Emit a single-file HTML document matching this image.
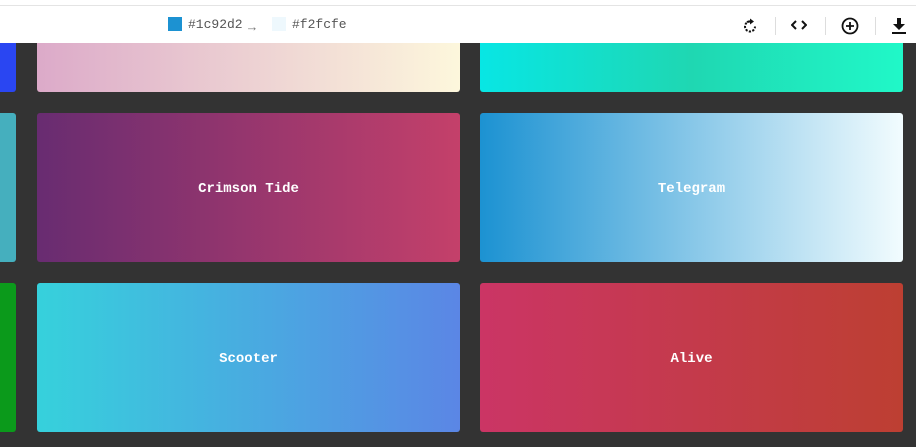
<!DOCTYPE html>
<html><head><style>
body{margin:0;width:916px;height:447px;background:#333;position:relative;overflow:hidden;font-family:"Liberation Mono",monospace}
.c{position:absolute;border-radius:3px;color:#fff;font-weight:bold;font-size:14px;display:flex;align-items:center;justify-content:center;padding-top:2px;box-sizing:border-box}
.bar{position:absolute;left:0;width:916px;background:#fff;border-top:1px solid #e4e4e4;box-sizing:border-box;top:5px;height:38px}
.top{position:absolute;left:0;top:0;width:916px;height:5px;background:#fff}
.t{position:absolute;top:11px;font-size:13px;color:#555}
.sep{position:absolute;top:11px;width:1px;height:18px;background:#ddd}
</style></head><body>
<div class="c" style="left:0;top:40px;width:16px;height:52px;background:#2a46f2;border-radius:0 3px 3px 0"></div>
<div class="c" style="left:37px;top:40px;width:423px;height:52px;background:linear-gradient(90deg,#dcaac9,#fdf7dc)"></div>
<div class="c" style="left:480px;top:40px;width:423px;height:52px;background:linear-gradient(90deg,#08e6e4,#1fd7b2 50%,#20f8c8)"></div>
<div class="c" style="left:0;top:113px;width:16px;height:149px;background:#45afbe;border-radius:0 3px 3px 0"></div>
<div class="c" style="left:37px;top:113px;width:423px;height:149px;background:linear-gradient(90deg,#682c71,#c4406a)">Crimson Tide</div>
<div class="c" style="left:480px;top:113px;width:423px;height:149px;background:linear-gradient(90deg,#1c92d2,#f2fcfe)">Telegram</div>
<div class="c" style="left:0;top:283px;width:16px;height:149px;background:#0b9a1b;border-radius:0 3px 3px 0"></div>
<div class="c" style="left:37px;top:283px;width:423px;height:149px;background:linear-gradient(90deg,#36d1dc,#5b86e5)">Scooter</div>
<div class="c" style="left:480px;top:283px;width:423px;height:149px;background:linear-gradient(90deg,#cb3565,#bd3f32)">Alive</div>
<div class="top"></div>
<div class="bar">
<div style="position:absolute;left:168px;top:11px;width:14px;height:14px;background:#1c92d2"></div>
<div class="t" style="left:188px">#1c92d2</div>
<div class="t" style="left:248px;top:14px;color:#777">→</div>
<div style="position:absolute;left:272px;top:11px;width:14px;height:14px;background:#eef8fd"></div>
<div class="t" style="left:292px">#f2fcfe</div>
<svg style="position:absolute;left:742px;top:12px" width="16" height="16" viewBox="0 0 16 16" fill="none" stroke="#111" stroke-width="2"><path d="M8 3.5A5 5 0 1 0 13 8.5" stroke-dasharray="2.2 1.4"/><path d="M5 4.2A5 5 0 0 1 9 3.5"/><path d="M8 0.5L12 3.5 8 6.5z" fill="#111" stroke="none"/></svg>
<div class="sep" style="left:775px"></div>
<svg style="position:absolute;left:791px;top:13px" width="16" height="12" viewBox="0 0 16 12" fill="none" stroke="#111" stroke-width="2"><path d="M5 2L1 6 5 10M11 2l4 4-4 4"/></svg>
<div class="sep" style="left:825px"></div>
<svg style="position:absolute;left:841px;top:11px" width="18" height="18" viewBox="0 0 18 18" fill="none" stroke="#111" stroke-width="1.8"><circle cx="9" cy="9" r="7.5"/><path d="M9 5v8M5 9h8"/></svg>
<div class="sep" style="left:875px"></div>
<svg style="position:absolute;left:891px;top:11px" width="16" height="18" viewBox="0 0 16 18"><path d="M6 1h4v6h4l-6 6-6-6h4z" fill="#111"/><rect x="1" y="15" width="14" height="2" fill="#111"/></svg>
</div>
</body></html>
